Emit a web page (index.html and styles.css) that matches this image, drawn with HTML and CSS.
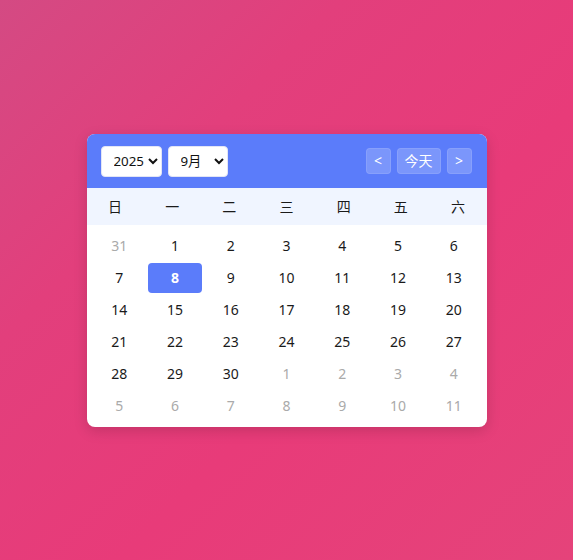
FILE: index.html
```html
<!DOCTYPE html>
<html lang="zh-CN">
<head>
<meta charset="utf-8">
<title>日历</title>
<link rel="stylesheet" href="styles.css">
</head>
<body>
<div class="calendar">
  <div class="cal-header">
    <div class="selects">
      <select class="sel sel-year">
        <option>2024</option>
        <option selected>2025</option>
        <option>2026</option>
      </select>
      <select class="sel sel-month">
        <option>1月</option><option>2月</option><option>3月</option><option>4月</option>
        <option>5月</option><option>6月</option><option>7月</option><option>8月</option>
        <option selected>9月</option><option>10月</option><option>11月</option><option>12月</option>
      </select>
    </div>
    <div class="nav">
      <button class="nav-btn">&lt;</button>
      <button class="nav-btn">今天</button>
      <button class="nav-btn">&gt;</button>
    </div>
  </div>
  <div class="weekdays">
    <div>日</div><div>一</div><div>二</div><div>三</div><div>四</div><div>五</div><div>六</div>
  </div>
  <div class="days">
    <div class="day other">31</div><div class="day">1</div><div class="day">2</div><div class="day">3</div><div class="day">4</div><div class="day">5</div><div class="day">6</div>
    <div class="day">7</div><div class="day selected">8</div><div class="day">9</div><div class="day">10</div><div class="day">11</div><div class="day">12</div><div class="day">13</div>
    <div class="day">14</div><div class="day">15</div><div class="day">16</div><div class="day">17</div><div class="day">18</div><div class="day">19</div><div class="day">20</div>
    <div class="day">21</div><div class="day">22</div><div class="day">23</div><div class="day">24</div><div class="day">25</div><div class="day">26</div><div class="day">27</div>
    <div class="day">28</div><div class="day">29</div><div class="day">30</div><div class="day other">1</div><div class="day other">2</div><div class="day other">3</div><div class="day other">4</div>
    <div class="day other">5</div><div class="day other">6</div><div class="day other">7</div><div class="day other">8</div><div class="day other">9</div><div class="day other">10</div><div class="day other">11</div>
  </div>
</div>
</body>
</html>
```
FILE: styles.css
```css
* { box-sizing: border-box; }
html, body { margin: 0; padding: 0; }
body {
  width: 573px;
  height: 560px;
  display: flex;
  align-items: center;
  justify-content: center;
  background: linear-gradient(135deg, #d44a83 0%, #e23f7c 30%, #e83b79 60%, #e5437a 100%);
  font-family: "Noto Sans", "Noto Sans CJK SC", sans-serif;
  font-size: 14px;
  color: #1a1a1a;
}
.calendar {
  width: 400px;
  background: #fff;
  border-radius: 8px;
  overflow: hidden;
  box-shadow: 0 4px 14px rgba(0, 0, 0, 0.15);
}
.cal-header {
  height: 54px;
  background: #5b7cfa;
  padding: 12px 15px 11px 14px;
  display: flex;
  align-items: flex-start;
  justify-content: space-between;
}
.selects { display: flex; gap: 6px; }
.sel {
  height: 31px;
  padding: 0 0 0 8px;
  border: 1px solid #e2e5f5;
  border-radius: 4px;
  background: #fff;
  font-family: "Noto Sans", "Noto Sans CJK SC", sans-serif;
  font-size: 13.33px;
  color: #111;
}
.sel-year { width: 61px; }
.sel-month { width: 60px; }
.nav { display: flex; gap: 6px; margin-top: 2px; }
.nav-btn {
  height: 26px;
  min-width: 25px;
  padding: 0 7px;
  border: 1px solid rgba(255, 255, 255, 0.1);
  border-radius: 4px;
  background: rgba(255, 255, 255, 0.2);
  color: #fff;
  font-family: "Noto Sans", "Noto Sans CJK SC", sans-serif;
  font-size: 14px;
  line-height: 1;
}
.weekdays {
  height: 37px;
  background: #f0f5ff;
  display: grid;
  grid-template-columns: repeat(7, 1fr);
  align-items: center;
  text-align: center;
}
.days {
  padding: 5px;
  display: grid;
  grid-template-columns: repeat(7, 1fr);
  grid-auto-rows: 32px;
}
.day {
  margin: 1px;
  border-radius: 4px;
  display: flex;
  align-items: center;
  justify-content: center;
}
.day.other { color: #aaa; }
.day.selected {
  background: #5b7cfa;
  color: #fff;
  font-weight: bold;
}
```
